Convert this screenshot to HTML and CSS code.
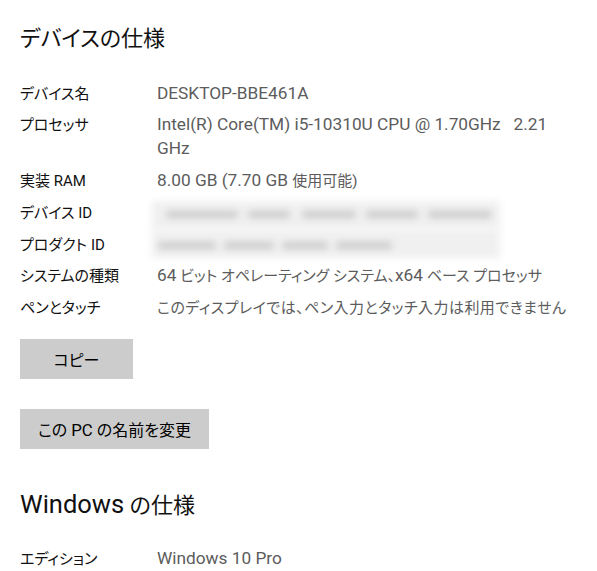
FILE: index.html
```html
<!DOCTYPE html>
<html lang="ja">
<head>
<meta charset="utf-8">
<link rel="stylesheet" href="styles.css">
</head>
<body>
<main class="page">
  <h1 class="title">デバイスの仕様</h1>
  <dl class="specs">
    <div class="row"><dt>デバイス名</dt><dd><span class="en">DESKTOP-BBE461A</span></dd></div>
    <div class="row"><dt>プロセッサ</dt><dd><span class="en">Intel(R) Core(TM) i5-10310U CPU @ 1.70GHz&nbsp;&nbsp; 2.21<br>GHz</span></dd></div>
    <div class="row"><dt>実装 RAM</dt><dd><span class="en">8.00 GB (7.70 GB </span>使用可能)</dd></div>
    <div class="row"><dt>デバイス ID</dt><dd><div class="redact redact-a"><span class="bar b1"></span><span class="bar b2"></span><span class="bar b3"></span><span class="bar b4"></span><span class="bar b5"></span></div></dd></div>
    <div class="row"><dt>プロダクト ID</dt><dd><div class="redact redact-b"><span class="bar c1"></span><span class="bar c2"></span><span class="bar c3"></span><span class="bar c4"></span></div></dd></div>
    <div class="row"><dt>システムの種類</dt><dd><span class="en">64</span> ビット オペレーティング システム、<span class="en">x64</span> ベース プロセッサ</dd></div>
    <div class="row"><dt>ペンとタッチ</dt><dd class="wide">このディスプレイでは、ペン入力とタッチ入力は利用できません</dd></div>
  </dl>
  <div class="actions">
    <button class="btn btn-copy">コピー</button>
    <button class="btn btn-rename">この <span class="en">PC</span> の名前を変更</button>
  </div>
  <h2 class="title title-win"><span class="en en-title">Windows</span> の仕様</h2>
  <dl class="specs specs-win">
    <div class="row"><dt>エディション</dt><dd><span class="en">Windows 10 Pro</span></dd></div>
  </dl>
</main>
</body>
</html>
```
FILE: styles.css
```css
html, body {
  margin: 0;
  padding: 0;
  background: #ffffff;
}
body {
  font-family: Roboto, "Noto Sans CJK JP", sans-serif;
  font-feature-settings: "palt";
  color: #000000;
  overflow: hidden;
}
.page {
  padding: 23px 20px 0 20px;
}
.title {
  margin: 0;
  font-size: 22px;
  line-height: 32px;
  font-weight: 400;
  color: #111111;
}
.en {
  font-size: 1.15em;
  line-height: 1;
}
.en-title {
  font-size: 1.16em;
}
.specs {
  margin: 23.5px 0 0 0;
  padding: 0;
}
.row {
  display: flex;
  padding: 4px 0;
  font-size: 15px;
  line-height: 23.8px;
}
.row dt {
  width: 137px;
  flex: none;
  color: #111111;
}
.row dd {
  display: flow-root;
  margin: 0;
  color: #5c5c5c;
  white-space: nowrap;
}
.row dd.wide {
  letter-spacing: 0.03em;
}
.redact {
  position: relative;
  margin-left: -5px;
  width: 348px;
  background: #f0f0f0;
  filter: blur(3.5px);
}
.redact-a {
  height: 28px;
  margin-top: -1px;
  margin-bottom: -3.2px;
}
.redact-b {
  height: 29px;
  margin-top: -4.7px;
  margin-bottom: -0.5px;
}
.bar {
  position: absolute;
  height: 7px;
  background: #cbcbcb;
  border-radius: 3px;
}
.redact-a .bar { top: 10px; }
.redact-b .bar { top: 13px; }
.b1 { left: 14px; width: 72px; }
.b2 { left: 96px; width: 42px; }
.b3 { left: 150px; width: 54px; }
.b4 { left: 214px; width: 52px; }
.b5 { left: 276px; width: 64px; }
.c1 { left: 6px; width: 58px; }
.c2 { left: 72px; width: 50px; }
.c3 { left: 130px; width: 46px; }
.c4 { left: 184px; width: 56px; }
.actions {
  display: flex;
  flex-direction: column;
  align-items: flex-start;
  gap: 30px;
  margin-top: 14px;
}
.btn {
  border: none;
  background: #cccccc;
  color: #000000;
  font-family: inherit;
  font-feature-settings: "palt";
  font-size: 16px;
  height: 40px;
  padding: 0;
}
.btn .en {
  font-size: 1.05em;
}
.btn-copy {
  width: 113px;
}
.btn-rename {
  width: 189px;
}
.title-win {
  margin-top: 41px;
}
.specs-win {
  margin-top: 22.5px;
}
```
